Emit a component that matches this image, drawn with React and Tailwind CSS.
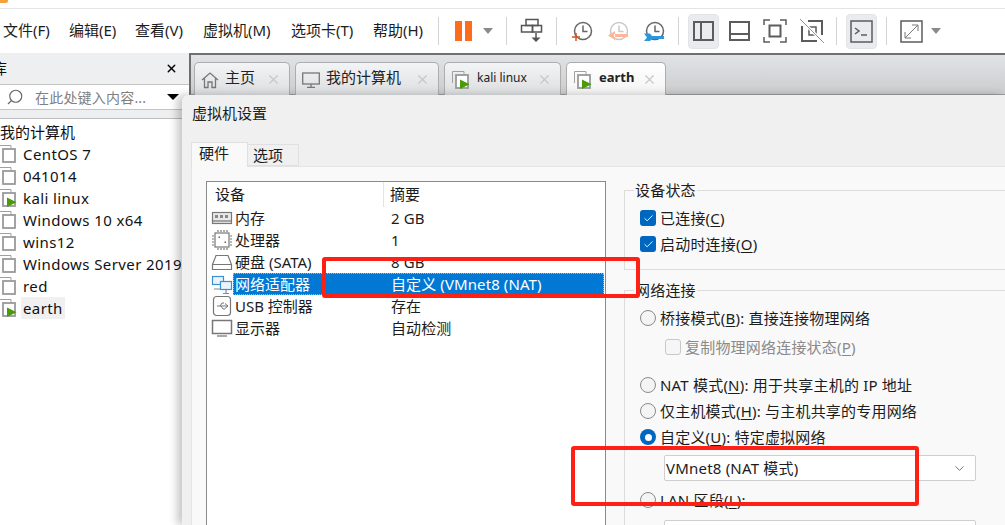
import React from "react";
import { X, Search, ChevronDown, Check } from "lucide-react";

const Sep = ({ ml }) => <div className={`w-px h-[28px] bg-[#d4d4d4] ${ml}`} />;
const Caret = ({ ml, color = "border-t-[#8a8a8a]", size = "border-x-[5px] border-t-[6px]" }) => (
  <div className={`w-0 h-0 border-x-transparent ${size} ${color} ${ml}`} />
);

function VmIcon({ play, className = "" }) {
  return (
    <svg width="20" height="20" viewBox="0 0 20 20" className={`shrink-0 ${className}`} fill="none">
      <path d="M1.500 13V1.500H13V5" stroke="#a0a0a0" strokeWidth="1" />
      <rect x="5" y="5" width="12" height="13" stroke="#9a9a9a" strokeWidth="1.800" fill="#fff" />
      {play && <path d="M9 9.500v9.500l9.500-4.700z" fill="#4a9a0a" />}
    </svg>
  );
}

function HistoryIcon({ children, accent }) {
  return (
    <svg width="24" height="24" viewBox="0 0 24 24" fill="none">
      <circle cx="12" cy="12" r="8.500" stroke={accent || "#666"} strokeWidth="1.500" />
      <path d="M12 6.500v6h4.500" stroke={accent || "#666"} strokeWidth="1.500" />
      {children}
    </svg>
  );
}

function Toolbar() {
  return (
    <div className="flex items-center h-[44px] bg-white text-[15px] text-[#1c1c1c]">
      <div className="flex pl-[3px] -mt-[2px]">
        <span className="w-[66px]">文件(F)</span>
        <span className="w-[66px]">编辑(E)</span>
        <span className="w-[68px]">查看(V)</span>
        <span className="w-[88px]">虚拟机(M)</span>
        <span className="w-[82px]">选项卡(T)</span>
        <span className="w-[65px]">帮助(H)</span>
      </div>
      <Sep />
      <div className="flex gap-[3px] ml-[16px]">
        <div className="w-[7px] h-[20px] bg-[#ff6a1f]" />
        <div className="w-[7px] h-[20px] bg-[#ff6a1f]" />
      </div>
      <Caret ml="ml-[11px]" />
      <Sep ml="ml-[13px]" />
      <svg width="24" height="26" viewBox="0 0 24 26" fill="none" className="ml-[13px]" stroke="#555" strokeWidth="1.500">
        <rect x="6" y="1.500" width="12" height="6" />
        <rect x="1.500" y="7.500" width="11" height="6.500" />
        <rect x="12.500" y="7.500" width="9" height="6.500" />
        <path d="M16 15v5" />
        <path d="M11.500 19.500h9L16 24z" fill="#555" stroke="none" />
      </svg>
      <Sep ml="ml-[12px]" />
      <div className="ml-[14px]">
        <HistoryIcon>
          <path d="M5 14v8M1 18h8" stroke="#d9541e" strokeWidth="1.500" />
        </HistoryIcon>
      </div>
      <div className="ml-[12px]">
        <HistoryIcon accent="#c9c9c9">
          <path d="M7 15h14v3H7z M8 12l-7 4.500 7 4.500z" fill="#ffb596" />
        </HistoryIcon>
      </div>
      <div className="ml-[12px]">
        <HistoryIcon>
          <path d="M1 14.500h6l2 2.500h12v3H9l-2 2H1l3-3.500z" fill="#2f96dc" />
        </HistoryIcon>
      </div>
      <Sep ml="ml-[11px]" />
      <div className="ml-[9px] w-[31px] h-[35px] rounded-[4px] bg-[#e9ebee] border border-[#e2e4e7] flex items-center justify-center">
        <div className="w-[21px] h-[20px] border-2 border-[#5c5c5c] flex">
          <div className="w-[7px] border-r-2 border-[#5c5c5c]" />
        </div>
      </div>
      <div className="ml-[10px] w-[21px] h-[20px] border-2 border-[#5c5c5c] flex items-end">
        <div className="w-full h-[6px] border-t-2 border-[#5c5c5c]" />
      </div>
      <svg width="24" height="24" viewBox="0 0 24 24" fill="none" className="ml-[13px]" stroke="#5c5c5c" strokeWidth="1.500">
        <path d="M1 6V1h6M17 1h6v5M23 18v5h-6M7 23H1v-5" />
        <rect x="6.500" y="6.500" width="11" height="11" strokeWidth="2" />
      </svg>
      <svg width="24" height="24" viewBox="0 0 24 24" fill="none" className="ml-[13px]" stroke="#5c5c5c" strokeWidth="2">
        <path d="M8 2h14v14M2 7v15h15" />
        <rect x="9" y="8" width="7" height="8" strokeWidth="1.500" />
        <path d="M0 0l24 24" stroke="#fff" strokeWidth="3" />
        <path d="M0 0l24 24" stroke="#8a96a3" strokeWidth="1" />
      </svg>
      <Sep ml="ml-[12px]" />
      <div className="ml-[9px] w-[31px] h-[35px] rounded-[4px] bg-[#e9ebee] border border-[#e2e4e7] flex items-center justify-center">
        <svg width="23" height="23" viewBox="0 0 23 23" fill="none" stroke="#5c5c5c">
          <rect x="1" y="1" width="21" height="21" strokeWidth="1.500" />
          <path d="M5 8l4 3-4 3" strokeWidth="1.500" />
          <path d="M11 15h6" strokeWidth="1.500" />
        </svg>
      </div>
      <Sep ml="ml-[9px]" />
      <svg width="23" height="23" viewBox="0 0 23 23" fill="none" className="ml-[13px]" stroke="#5c5c5c">
        <rect x="1" y="1" width="21" height="21" strokeWidth="1.500" />
        <path d="M5 18L18 5M12 5h6v6M5 12v6h6" stroke="#7b7b7b" strokeWidth="1" />
      </svg>
      <Caret ml="ml-[8px]" />
    </div>
  );
}

const treeRows = [
  ["CentOS 7"],
  ["041014"],
  ["kali linux", true],
  ["Windows 10 x64"],
  ["wins12"],
  ["Windows Server 2019"],
  ["red"],
  ["earth", true, true],
];

function Sidebar() {
  return (
    <div className="w-[189px] shrink-0 flex flex-col bg-[#eeeff0] text-[15px] text-[#111]">
      <div className="h-[31px] flex items-center justify-between pr-[11px]">
        <span className="-ml-[8px]">库</span>
        <X size={13} strokeWidth={2.500} className="text-black" />
      </div>
      <div className="h-[26px] border-y border-[#c4c4c4] bg-white flex items-center pl-[6px] pr-[10px]">
        <Search size={18} strokeWidth={1.500} className="text-[#666] -scale-x-100" />
        <span className="ml-[11px] text-[14px] text-[#808080] tracking-[0.2px] whitespace-nowrap">在此处键入内容...</span>
        <Caret ml="ml-auto" color="border-t-black" size="border-x-[6px] border-t-[6px]" />
      </div>
      <div className="h-[9px] border-b border-[#bcbcbc]" />
      <div className="flex-1 bg-white pt-[2px]">
        <div className="h-[22px] leading-[22px] text-[15px]">我的计算机</div>
        {treeRows.map(([name, play, hl]) => (
          <div key={name} className="h-[22px] flex items-center">
            <VmIcon play={play} className="-ml-[2px]" />
            <span className={`ml-[3px] pl-[2px] pr-[2px] h-[22px] leading-[22px] text-[15px] tracking-[0.4px] whitespace-nowrap ${hl ? "bg-[#f0f0f0]" : ""}`}>
              {name}
            </span>
          </div>
        ))}
      </div>
    </div>
  );
}

function Tab({ width, icon, label, active, textClass = "text-[15px]" }) {
  return (
    <div
      className={`${width} h-[34px] mt-[7px] shrink-0 rounded-t-[5px] border border-b-0 border-[#adadad] flex items-center pl-[6px] pr-[8px] ${
        active ? "bg-gradient-to-b from-white to-[#f3f3f3]" : "bg-gradient-to-b from-[#f3f4f5] to-[#dcdddf]"
      }`}
    >
      {icon}
      <span className={`ml-[6px] -mt-[4px] text-[#222] whitespace-nowrap ${textClass} ${active ? "font-bold" : ""}`}>{label}</span>
      <X size={15} strokeWidth={1.800} className="ml-auto text-[#c6c6c6]" />
    </div>
  );
}

const HouseIcon = () => (
  <svg width="18" height="18" viewBox="0 0 18 18" fill="none" stroke="#777" strokeWidth="1.300" className="shrink-0">
    <path d="M1 9l8-7 8 7M3.500 7.500V16.500h3.500V11h4v5.500h3.500V7.500" />
  </svg>
);
const MonitorIcon = () => (
  <svg width="18" height="18" viewBox="0 0 18 18" fill="none" stroke="#777" strokeWidth="1.300" className="shrink-0">
    <rect x="0.700" y="2" width="16.600" height="11" />
    <path d="M9 13v3M5 16.300h8" />
  </svg>
);

/* ---------- device list icons ---------- */
const DevIcon = ({ children }) => (
  <svg width="22" height="22" viewBox="0 0 22 22" fill="none" stroke="#777" strokeWidth="1.200" className="shrink-0">
    {children}
  </svg>
);
const devices = [
  {
    name: "内存",
    value: "2 GB",
    icon: (
      <DevIcon>
        <rect x="1.500" y="5.500" width="19" height="11" fill="#e8e8e8" />
        <path d="M4 8h3v3H4zM9 8h3v3H9zM14 8h3v3h-3z" fill="#888" stroke="none" />
        <path d="M2 14h18" />
      </DevIcon>
    ),
  },
  {
    name: "处理器",
    value: "1",
    icon: (
      <DevIcon>
        <rect x="4" y="4" width="14" height="14" />
        <path d="M7 1v2M10 1v2M13 1v2M16 1v2M7 19v2M10 19v2M13 19v2M16 19v2M1 7h2M1 10h2M1 13h2M1 16h2M19 7h2M19 10h2M19 13h2M19 16h2" />
        <path d="M7.500 7.500h1.500v1.500H7.500zM13.500 12.500h1.500v1.500h-1.500z" fill="#666" stroke="none" />
      </DevIcon>
    ),
  },
  {
    name: "硬盘 (SATA)",
    value: "8 GB",
    icon: (
      <DevIcon>
        <path d="M1.500 13.500L5 4.500h12l3.500 9v5h-19zM1.500 13.500h19" />
      </DevIcon>
    ),
  },
  {
    name: "网络适配器",
    value: "自定义 (VMnet8 (NAT)",
    selected: true,
    icon: (
      <DevIcon>
        <rect x="1.500" y="3.500" width="11" height="8" stroke="#3d8fd1" fill="#e8f3fb" />
        <rect x="9.500" y="8.500" width="11" height="8" stroke="#3d8fd1" fill="#e8f3fb" />
        <path d="M3 16h6M15 17v3M12 20.500h6" stroke="#888" />
      </DevIcon>
    ),
  },
  {
    name: "USB 控制器",
    value: "存在",
    icon: (
      <DevIcon>
        <rect x="2.500" y="1.500" width="17" height="19" rx="3" />
        <path d="M6 11h11M14 8.500l3 2.500-3 2.500M9 11l2-3h2M10 11l2 3h2" strokeWidth="1" />
      </DevIcon>
    ),
  },
  {
    name: "显示器",
    value: "自动检测",
    icon: (
      <DevIcon>
        <rect x="1.500" y="3.500" width="19" height="13" strokeWidth="1.500" />
        <path d="M6 19h10" strokeWidth="2" stroke="#aaa" />
      </DevIcon>
    ),
  },
];

function DeviceList() {
  return (
    <div className="w-[400px] h-[360px] shrink-0 bg-white border border-[#8a8a8a] text-[15px] text-[#1c1c1c]">
      <div className="h-[25px] flex items-center">
        <span className="w-[177px] pl-[8px] border-r border-[#e4e4e4] leading-[25px]">设备</span>
        <span className="pl-[6px]">摘要</span>
      </div>
      {devices.map((d) => (
        <div key={d.name} className="h-[22px] flex items-center pl-[4px]">
          {d.icon}
          <div className={`flex flex-1 h-[22px] leading-[22px] items-center mr-[1px] ${d.selected ? "bg-[#0078d4] text-white outline outline-1 outline-dotted outline-offset-[-1px] outline-[#f0a860]" : ""}`}>
            <span className="w-[151px] pl-[2px] whitespace-nowrap">{d.name}</span>
            <span className="pl-[7px] whitespace-nowrap tracking-[0.1px]">{d.value}</span>
          </div>
        </div>
      ))}
    </div>
  );
}

const U = ({ children }) => <span className="underline underline-offset-2">{children}</span>;

const CheckBox = ({ checked, disabled }) => (
  <span
    className={`w-[16px] h-[16px] rounded-[3px] shrink-0 flex items-center justify-center ${
      checked ? "bg-[#0067c0]" : disabled ? "border border-[#c8c8c8] bg-[#f6f6f6]" : ""
    }`}
  >
    {checked && <Check size={11} strokeWidth={2} className="text-white" />}
  </span>
);

const Radio = ({ checked }) =>
  checked ? (
    <span className="w-[16px] h-[16px] rounded-full bg-[#0067c0] shrink-0 flex items-center justify-center">
      <span className="w-[7px] h-[7px] rounded-full bg-white" />
    </span>
  ) : (
    <span className="w-[16px] h-[16px] rounded-full border border-[#8a8a8a] bg-[#f4f4f4] shrink-0" />
  );

const Row = ({ children, className = "" }) => (
  <div className={`h-[26px] flex items-center gap-[4px] pl-[15px] whitespace-nowrap ${className}`}>{children}</div>
);

const Select = ({ children, className = "" }) => (
  <div className={`ml-[39px] w-[312px] h-[26px] bg-white border border-[#cfcfcf] rounded-[2px] flex items-center pl-[1px] pr-[8px] shrink-0 ${className}`}>
    <span>{children}</span>
    <ChevronDown size={15} strokeWidth={1.300} className="ml-auto text-[#555]" />
  </div>
);

function Settings() {
  return (
    <div className="ml-[18px] flex-1 min-w-0 overflow-hidden text-[15px] text-[#1c1c1c] tracking-[0.2px]">
      <fieldset className="w-[420px] border border-[#dcdcdc] pb-[12px] -mt-[1px]">
        <legend className="ml-[9px] px-[1px] h-[20px] leading-[20px]">设备状态</legend>
        <div className="pt-[5px]">
          <Row><CheckBox checked /><span>已连接(<U>C</U>)</span></Row>
          <Row><CheckBox checked /><span>启动时连接(<U>O</U>)</span></Row>
        </div>
      </fieldset>
      <fieldset className="w-[420px] border-t border-l border-[#dcdcdc] mt-[10px]">
        <legend className="ml-[9px] px-[1px] h-[20px] leading-[20px]">网络连接</legend>
        <div className="pt-[5px]">
          <Row><Radio /><span>桥接模式(<U>B</U>): 直接连接物理网络</span></Row>
          <Row className="mt-[3px] pl-[40px] text-[#8a8a8a]"><CheckBox disabled /><span>复制物理网络连接状态(<U>P</U>)</span></Row>
          <Row className="mt-[12px]"><Radio /><span>NAT 模式(<U>N</U>): 用于共享主机的 IP 地址</span></Row>
          <Row><Radio /><span>仅主机模式(<U>H</U>): 与主机共享的专用网络</span></Row>
          <Row><Radio checked /><span>自定义(<U>U</U>): 特定虚拟网络</span></Row>
          <Select className="mt-[5px]">VMnet8 (NAT 模式)</Select>
          <Row className="mt-[6px]"><Radio /><span>LAN 区段(<U>L</U>):</span></Row>
          <div className="ml-[39px] mt-[7px] w-[312px] h-[26px] bg-white border border-[#cfcfcf] rounded-[2px]" />
        </div>
      </fieldset>
    </div>
  );
}

function Dialog() {
  return (
    <div className="absolute left-[182px] top-[95px] right-0 bottom-0 bg-[#f0f0f0] rounded-tl-[6px] shadow-[-5px_0_9px_rgba(0,0,0,0.22)] flex flex-col text-[#1c1c1c]">
      <div className="h-[36px] pl-[10px] flex items-center text-[15px]">虚拟机设置</div>
      <div className="h-[36px] pl-[9px] pt-[11px] flex items-start text-[15px] relative z-10">
        <div className="w-[57px] h-[25px] bg-[#f9f9f9] border border-b-0 border-[#e0e0e0] flex justify-start pl-[7px] leading-[21px]">硬件</div>
        <div className="w-[51px] h-[22px] mt-[2px] bg-[#f0f0f0] border border-l-0 border-[#e0e0e0] flex justify-start pl-[5px] leading-[21px]">选项</div>
      </div>
      <div className="flex-1 min-h-0 ml-[9px] bg-[#f9f9f9] border-t border-l border-[#e4e4e4] flex pl-[14px] pt-[14px] -mt-[1px] overflow-hidden">
        <DeviceList />
        <Settings />
      </div>
    </div>
  );
}

export default function App() {
  return (
    <div className="relative w-[1005px] h-[525px] overflow-hidden bg-white [font-family:'Noto_Sans','Noto_Sans_CJK_SC',sans-serif]">
      <div className="h-[9px] border-b border-[#e4e4e4] bg-white">
        <div className="w-[8px] h-[3px] bg-[#f7a13c] rounded-br-[2px]" />
      </div>
      <Toolbar />
      <div className="flex h-[472px]">
        <Sidebar />
        <div className="flex-1 border-t-2 border-l-2 border-[#6f6f6f] h-[42px] bg-gradient-to-b from-[#e2e3e6] to-[#cbcccd] border-b-[1px] border-b-[#9c9c9c] flex gap-[5px] pl-[3px]">
          <Tab width="w-[96px]" icon={<HouseIcon />} label="主页" />
          <Tab width="w-[144px]" icon={<MonitorIcon />} label="我的计算机" />
          <Tab width="w-[117px]" icon={<VmIcon play />} label="kali linux" textClass="text-[12px]" />
          <Tab width="w-[100px]" icon={<VmIcon play />} label="earth" active textClass="text-[13px]" />
        </div>
      </div>
      <Dialog />
      <div className="absolute left-[322px] top-[257px] w-[318px] h-[41px] border-4 border-[#ff2015] rounded-[3px]" />
      <div className="absolute left-[571px] top-[446px] w-[348px] h-[60px] border-4 border-[#ff2015] rounded-[3px]" />
    </div>
  );
}
